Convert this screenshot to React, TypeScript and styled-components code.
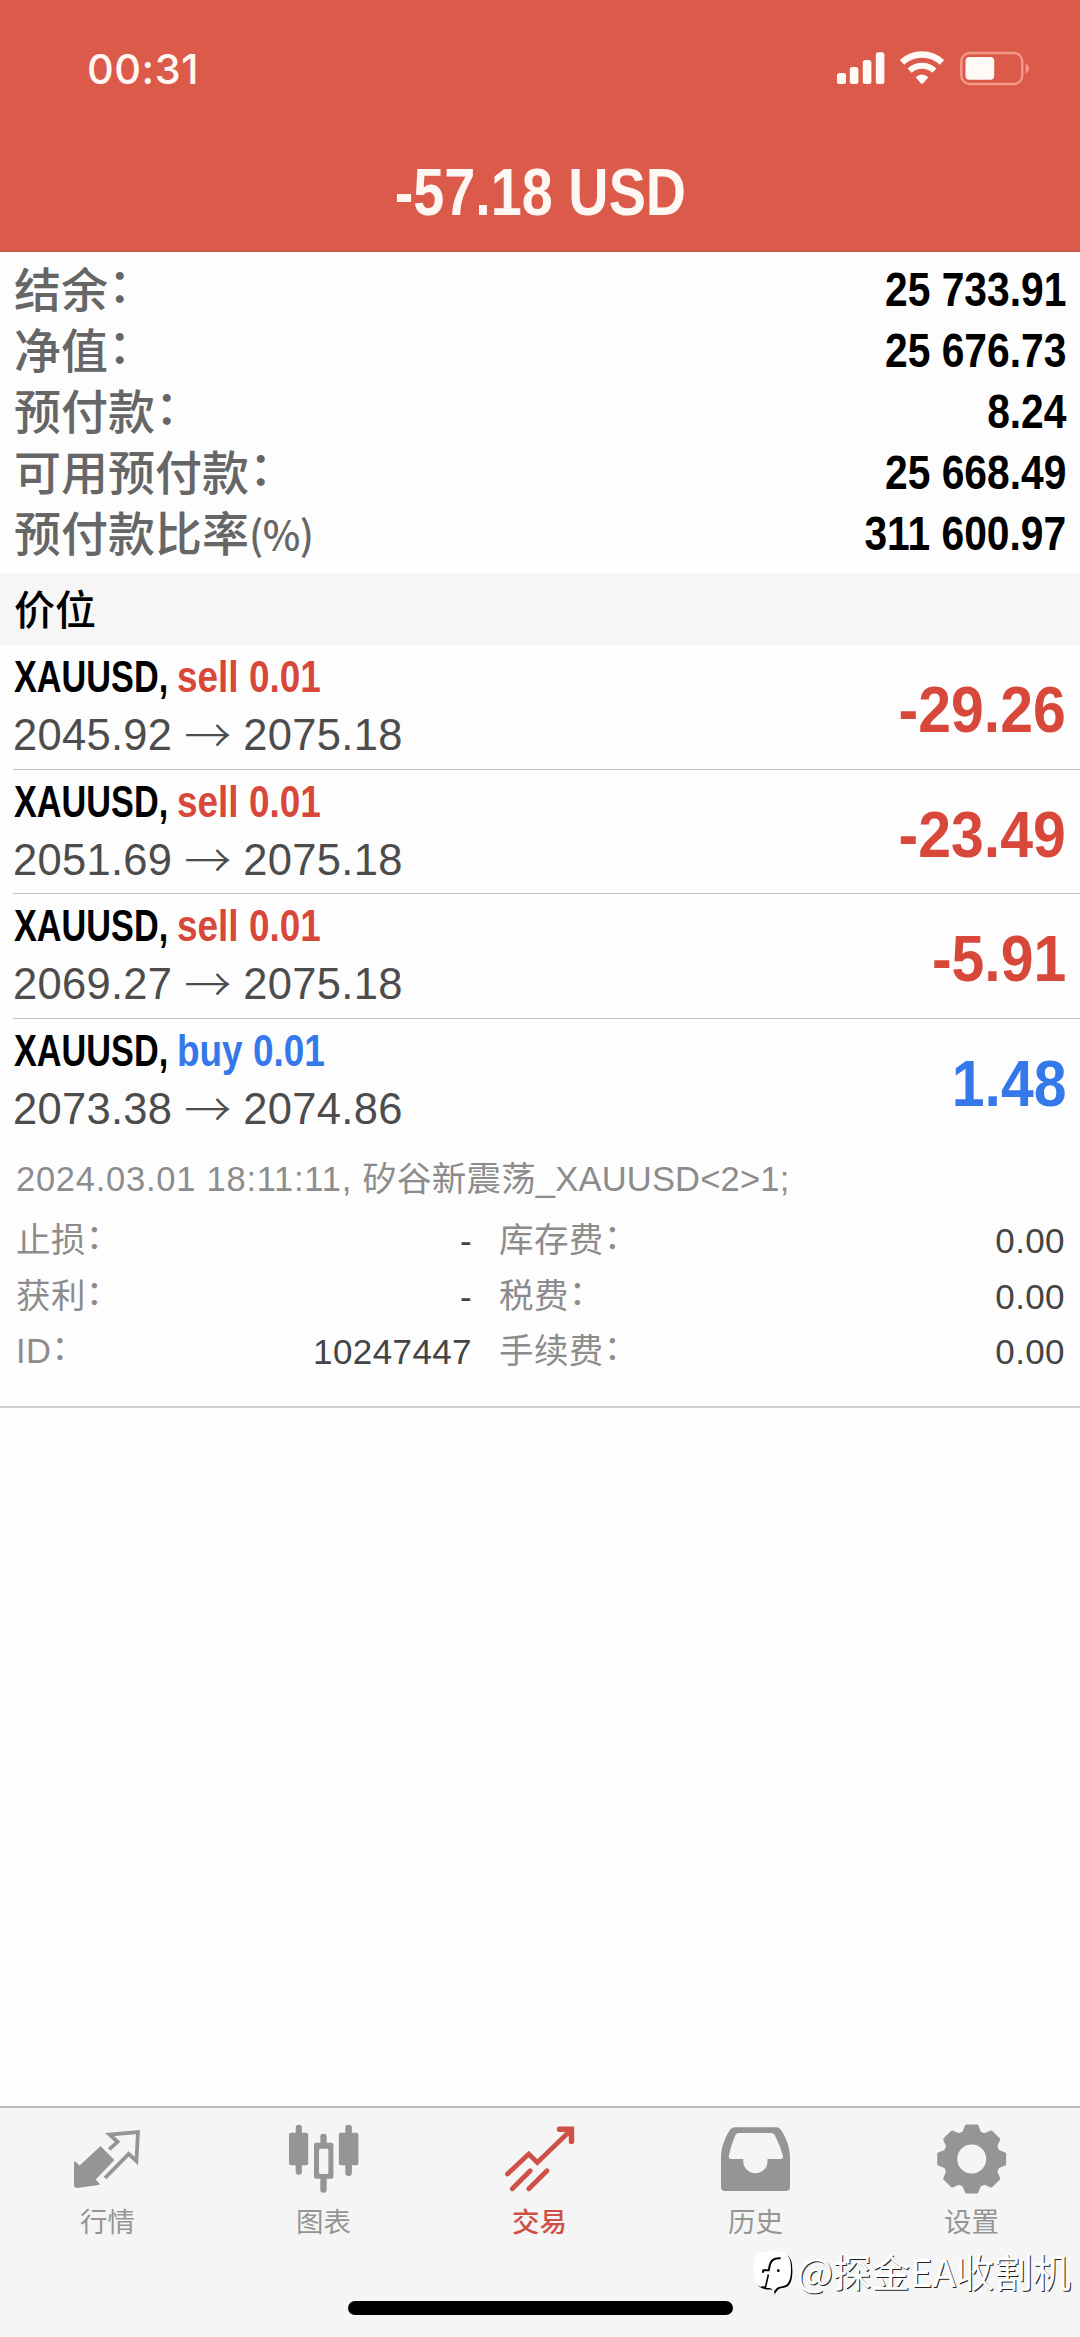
import React from "react";
import styled, { createGlobalStyle } from "styled-components";

const SANS = '"Liberation Sans", "Noto Sans CJK SC", sans-serif';
const CJK = '"Noto Sans CJK SC", "Liberation Sans", sans-serif';
const RED = "#d8483a";
const BLUE = "#3478ea";

const GlobalStyle = createGlobalStyle`
  * { box-sizing: border-box; }
  body { margin: 0; background: #fdfdfd; }
`;

const Screen = styled.div`
  position: relative;
  display: flex;
  flex-direction: column;
  width: 1080px;
  height: 2337px;
  overflow: hidden;
  background: #fdfdfd;
  font-family: ${SANS};
  white-space: nowrap;
`;

const Header = styled.header`
  display: flex;
  flex-direction: column;
  height: 252px;
  background: #db5a49;
  border-bottom: 2px solid #c9594b;
  color: #fff7f3;
`;

const StatusBar = styled.div`
  display: flex;
  justify-content: space-between;
  align-items: center;
  height: 138px;
  padding: 0 49px 0 87px;
`;

const Clock = styled.span`
  font: 550 41.5px/50px Inter, sans-serif;
  letter-spacing: 0.5px;
`;

const TitleRow = styled.div`
  display: flex;
  justify-content: center;
  height: 108px;
  line-height: 108px;
`;

const Condensed = styled.span<{ $size: number; $scale: number; $origin?: string; $color?: string }>`
  display: inline-block;
  font-family: ${SANS};
  font-weight: 700;
  font-size: ${(p) => p.$size}px;
  color: ${(p) => p.$color || "inherit"};
  transform: scaleX(${(p) => p.$scale});
  transform-origin: ${(p) => p.$origin || "left"} center;
`;

const Account = styled.section`
  display: flex;
  flex-direction: column;
  height: 321px;
  padding: 7px 14px 0 14px;
`;

const AccountRow = styled.div`
  display: flex;
  justify-content: space-between;
  height: 61px;
  line-height: 61px;
  color: #000;
`;

const AccountLabel = styled.span`
  font-family: ${CJK};
  font-weight: 500;
  font-size: 47px;
  line-height: 56px;
  color: #666;
`;

const Unit = styled.span`
  font-size: 40px;
  letter-spacing: -0.5px;
  vertical-align: 1px;
`;

const Colon = styled.span`
  font-family: "Noto Sans CJK SC", sans-serif;
  line-height: 0;
  vertical-align: 0.1em;
`;

const SectionBar = styled.div`
  height: 72px;
  padding-left: 14px;
  background: #f6f6f6;
  font: 500 41px/68px ${CJK};
  color: #000;
`;

const Position = styled.article<{ $divided: boolean }>`
  display: flex;
  justify-content: space-between;
  height: 124.5px;
  margin-left: 13px;
  padding: 3px 14px 0 0;
  border-bottom: 1px solid ${(p) => (p.$divided ? "#c2c2c2" : "transparent")};
`;

const PositionInfo = styled.div`
  display: flex;
  flex-direction: column;
  line-height: 58px;
`;

const Deal = styled.div`
  display: flex;
  height: 58px;
`;

const SymbolSlot = styled.div`
  width: 164px;
  padding-left: 1px;
`;

const Prices = styled.div`
  display: flex;
  align-items: center;
  height: 58px;
  font-size: 43.5px;
  letter-spacing: 0.3px;
  color: #4c4c4c;
`;

const Arrow = styled.span`
  width: 71px;
  text-align: center;
  font: 300 47px/50px ${CJK};
  padding-bottom: 4px;
`;

const Amount = styled.div`
  line-height: 123px;
`;

const Details = styled.section`
  height: 265px;
  padding: 8px 15px 0 16px;
  border-bottom: 2px solid #d0d0d0;
  font-size: 34.5px;
  color: #8c8c8c;
`;

const Comment = styled.div`
  height: 56px;
  line-height: 56px;
  margin-bottom: 6px;
  letter-spacing: 0.2px;
`;

const OpenTime = styled.span`
  letter-spacing: 0.75px;
`;

const DetailGrid = styled.div`
  display: grid;
  grid-template-columns: 456px 566px;
  grid-auto-rows: 55.5px;
  column-gap: 27px;
  line-height: 55px;
`;

const DetailCell = styled.div`
  display: flex;
  justify-content: space-between;
  letter-spacing: 0.4px;
`;

const DetailValue = styled.span`
  color: #444;
  font-size: 35px;
`;

const Spacer = styled.div`
  flex: 1;
`;

const TabBar = styled.nav`
  display: grid;
  grid-template-columns: repeat(5, 1fr);
  height: 231px;
  background: #f5f5f5;
  border-top: 2px solid #bcbcbc;
`;

const Tab = styled.div<{ $active?: boolean }>`
  display: flex;
  flex-direction: column;
  align-items: center;
  padding-top: 16px;
  color: ${(p) => (p.$active ? "#cf5046" : "#959595")};
  font: ${(p) => (p.$active ? 500 : 400)} 27.5px/40px ${CJK};

  svg { display: block; margin-bottom: 4px; }
  span { margin-right: 1px; }
`;

const HomeIndicator = styled.div`
  position: absolute;
  left: 348px;
  bottom: 22px;
  width: 385px;
  height: 14px;
  border-radius: 7px;
  background: #000;
`;

const Watermark = styled.div`
  position: absolute;
  right: 9px;
  bottom: 41px;
  display: flex;
  align-items: center;
  font: 400 38.4px/50px ${CJK};
  color: #fff;
  text-shadow: 1px 1px 0.5px #222;

  svg { margin: 6px 1px 0 0; }
`;

const StatusIcons = () => (
  <svg width="196" height="38" viewBox="835 50 196 38" fill="#fffaf6">
    <rect x="837" y="73" width="9" height="11" rx="2.5" />
    <rect x="849.8" y="67" width="8.6" height="17" rx="2.5" />
    <rect x="862.8" y="60" width="8.6" height="24" rx="2.5" />
    <rect x="875.8" y="52.3" width="8.6" height="31.7" rx="2.5" />
    <g fill="none" stroke="#fffaf6">
      <path d="M902 62.3A29.5 29.5 0 0 1 942 62.3" strokeWidth="6.4" />
      <path d="M909.6 70.6A18 18 0 0 1 934.4 70.6" strokeWidth="6" />
    </g>
    <path d="M915.6 77.2Q922 72 928.4 77.2L923.2 83.2Q922 84.4 920.8 83.2Z" />
    <rect x="961.3" y="53" width="61" height="31" rx="8.5" fill="none" stroke="#f39a8c" strokeWidth="2.4" />
    <rect x="965.5" y="57" width="28.7" height="22.8" rx="4" />
    <path d="M1025.6 64V73.4Q1029 72 1029 68.7Q1029 65.4 1025.6 64Z" fill="#f39a8c" />
  </svg>
);

const QuotesIcon = () => (
  <svg width="72" height="72" viewBox="0 0 72 72">
    <path d="M3 38.5L7.5 43L28.5 23.5L41 36L22.2 55.5L26.5 60L5 63L3 62Z" fill="currentColor" stroke="currentColor" strokeWidth="2" strokeLinejoin="round" />
    <path d="M37.2 25.4L45.6 17.8L37.5 10.5L66 8L64.4 37L56.7 29.8L33 54" fill="none" stroke="currentColor" strokeWidth="3.8" />
  </svg>
);

const ChartIcon = () => (
  <svg width="72" height="72" viewBox="0 0 72 72" fill="currentColor">
    <rect x="7.7" y="0.7" width="6.2" height="50" rx="3" />
    <rect x="1" y="8.7" width="19.2" height="32.6" rx="2" />
    <rect x="57.3" y="0.7" width="6.6" height="51.3" rx="3" />
    <rect x="50.8" y="8.7" width="19.6" height="32.6" rx="2" />
    <rect x="32.3" y="9.7" width="6.4" height="14" rx="3" />
    <rect x="32.3" y="50" width="6.4" height="18.8" rx="3" />
    <path fillRule="evenodd" d="M28 18.7H43.4Q45.4 18.7 45.4 20.7V52.7Q45.4 54.7 43.4 54.7H28Q26 54.7 26 52.7V20.7Q26 18.7 28 18.7ZM32.5 24.7Q31 24.7 31 26.2V48.6Q31 50 32.5 50H39Q40.4 50 40.4 48.6V26.2Q40.4 24.7 39 24.7Z" />
  </svg>
);

const TradeIcon = () => (
  <svg width="72" height="72" viewBox="0 0 72 72" fill="none" stroke="currentColor" strokeWidth="4.8">
    <path d="M3.5 50L24.7 30L33.3 38.4L67 6" strokeLinecap="round" />
    <path d="M55.5 5.3H67.5V17.5" strokeWidth="5.4" strokeLinecap="round" />
    <path d="M26.2 46.8L8.3 64.8M43 46.8L24.8 64.8" strokeLinecap="round" />
  </svg>
);

const HistoryIcon = () => (
  <svg width="72" height="72" viewBox="0 0 72 72" fill="currentColor">
    <path
      fillRule="evenodd"
      d="M1 33C1 23 6 11 10.5 5.3Q12 3.3 15 3.3H56Q59 3.3 60.7 5.5C66 13 70 24 70 33V63Q70 67 66 67H5Q1 67 1 63ZM11 35Q8.3 35 8.8 32Q11 21 15 12Q16.2 9 19 9H51Q54 9 55.2 12Q60 21 63 32Q63.6 35 61 35H47.5V37.5A12.1 11.8 0 0 1 23.3 37.5V35Z"
    />
  </svg>
);

const gearPoints = Array.from({ length: 8 }, (_, i) => i * 45)
  .flatMap((a) => [[a - 17, 27.3], [a - 9, 33.4], [a + 9, 33.4], [a + 17, 27.3]])
  .map(([deg, r]) => {
    const t = (deg * Math.PI) / 180;
    return `${(35.7 + r * Math.cos(t)).toFixed(2)} ${(35 + r * Math.sin(t)).toFixed(2)}`;
  })
  .join("L");

const SettingsIcon = () => (
  <svg width="72" height="72" viewBox="0 0 72 72" fill="currentColor">
    <path
      fillRule="evenodd"
      stroke="currentColor"
      strokeWidth="3"
      strokeLinejoin="round"
      d={`M${gearPoints}ZM51.7 35A16 16 0 1 0 19.7 35A16 16 0 1 0 51.7 35Z`}
    />
  </svg>
);

const BLOB =
  "M2.7 20C2.7 6 7 2.3 21 2.3C36 2.3 40 6 40 20C40 32 37 37 30 37.5C25.5 38 24 41 22.3 44C22 40 20 39 17 39C6 39 2.7 34 2.7 20Z";

const WatermarkLogo = () => (
  <svg width="45" height="47" viewBox="0 0 45 47">
    <path d={BLOB} transform="translate(1.4 1.4)" fill="#000" />
    <path d={BLOB} fill="#fff" />
    <g fill="none" stroke="#000" strokeWidth="2">
      <path d="M29.6 9.2Q20.5 8.6 18.9 15.5L17.8 21.2H12.4L11.8 23.8" />
      <path d="M17.4 25.5L14.4 38.6L10.5 37.8" strokeWidth="1.6" />
    </g>
    <circle cx="27.3" cy="21.7" r="1.4" />
  </svg>
);

const account = [
  { label: "结余", value: "25 733.91" },
  { label: "净值", value: "25 676.73" },
  { label: "预付款", value: "8.24" },
  { label: "可用预付款", value: "25 668.49" },
  { label: "预付款比率", unit: "(%)", value: "311 600.97" },
];

const positions = [
  { side: "sell", volume: "0.01", open: "2045.92", now: "2075.18", profit: "-29.26" },
  { side: "sell", volume: "0.01", open: "2051.69", now: "2075.18", profit: "-23.49" },
  { side: "sell", volume: "0.01", open: "2069.27", now: "2075.18", profit: "-5.91" },
  { side: "buy", volume: "0.01", open: "2073.38", now: "2074.86", profit: "1.48" },
];

const details = [
  ["止损", "-"],
  ["库存费", "0.00"],
  ["获利", "-"],
  ["税费", "0.00"],
  ["ID", "10247447"],
  ["手续费", "0.00"],
];

const tabs = [
  { label: "行情", Icon: QuotesIcon },
  { label: "图表", Icon: ChartIcon },
  { label: "交易", Icon: TradeIcon, active: true },
  { label: "历史", Icon: HistoryIcon },
  { label: "设置", Icon: SettingsIcon },
];

export default function App() {
  return (
    <Screen>
      <GlobalStyle />
      <Header>
        <StatusBar>
          <Clock>00:31</Clock>
          <StatusIcons />
        </StatusBar>
        <TitleRow>
          <Condensed $size={66} $scale={0.845} $origin="center">-57.18 USD</Condensed>
        </TitleRow>
      </Header>

      <Account>
        {account.map((row) => (
          <AccountRow key={row.label}>
            <AccountLabel>
              {row.label}
              {row.unit ? <Unit>{row.unit}</Unit> : <Colon>：</Colon>}
            </AccountLabel>
            <Condensed $size={47.5} $scale={0.858} $origin="right">{row.value}</Condensed>
          </AccountRow>
        ))}
      </Account>

      <SectionBar>价位</SectionBar>

      {positions.map((p, i) => {
        const color = p.side === "buy" ? BLUE : RED;
        return (
          <Position key={p.open} $divided={i < positions.length - 1}>
            <PositionInfo>
              <Deal>
                <SymbolSlot>
                  <Condensed $size={44.5} $scale={0.77}>XAUUSD,</Condensed>
                </SymbolSlot>
                <Condensed $size={44.5} $scale={0.83} $color={color}>
                  {p.side} {p.volume}
                </Condensed>
              </Deal>
              <Prices>
                <span>{p.open}</span>
                <Arrow>→</Arrow>
                <span>{p.now}</span>
              </Prices>
            </PositionInfo>
            <Amount>
              <Condensed $size={65.5} $scale={0.9} $origin="right" $color={color}>{p.profit}</Condensed>
            </Amount>
          </Position>
        );
      })}

      <Details>
        <Comment>
          <OpenTime>2024.03.01 18:11:11, </OpenTime>
          矽谷新震荡_XAUUSD&lt;2&gt;1;
        </Comment>
        <DetailGrid>
          {details.map(([label, value]) => (
            <DetailCell key={label}>
              <span>
                {label}
                <Colon>：</Colon>
              </span>
              <DetailValue>{value}</DetailValue>
            </DetailCell>
          ))}
        </DetailGrid>
      </Details>

      <Spacer />

      <TabBar>
        {tabs.map(({ label, Icon, active }) => (
          <Tab key={label} $active={active}>
            <Icon />
            <span>{label}</span>
          </Tab>
        ))}
      </TabBar>

      <HomeIndicator />
      <Watermark>
        <WatermarkLogo />
        <span>@探金EA收割机</span>
      </Watermark>
    </Screen>
  );
}
